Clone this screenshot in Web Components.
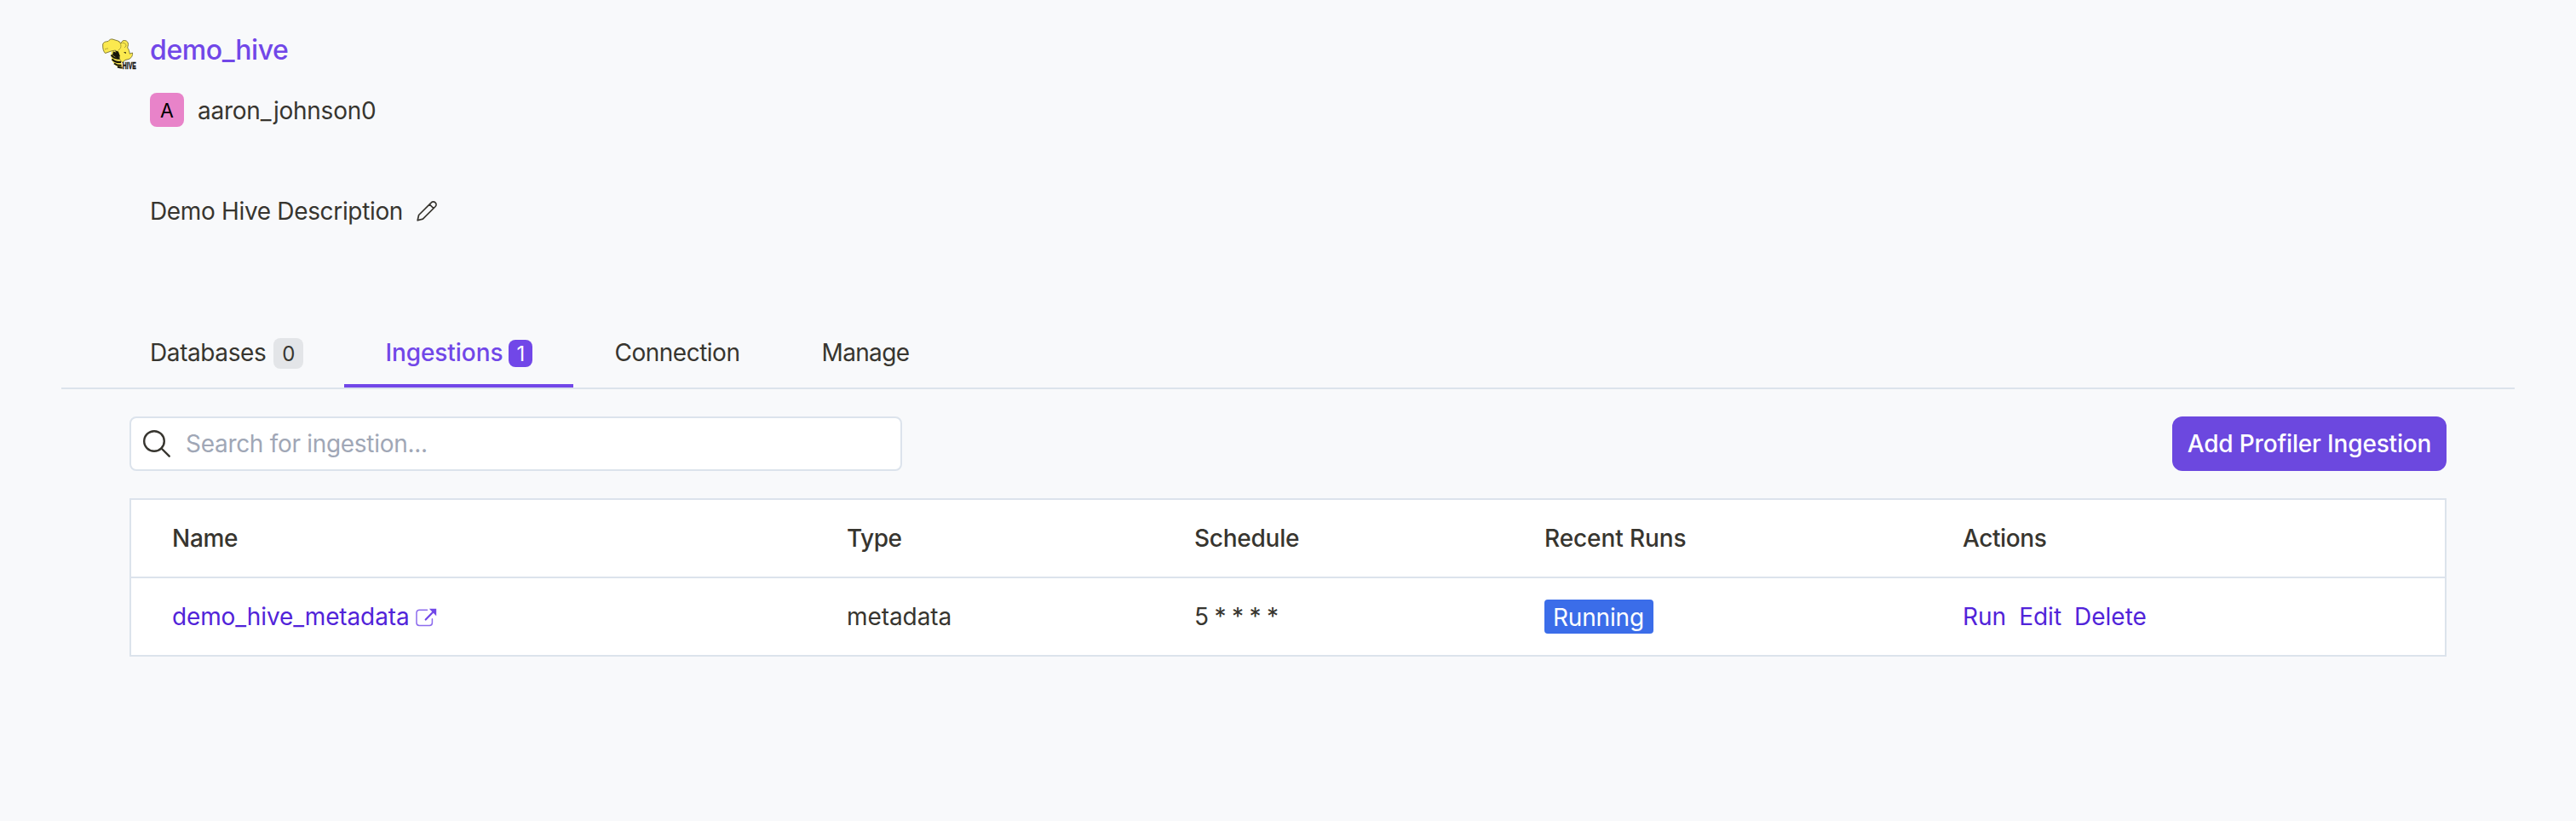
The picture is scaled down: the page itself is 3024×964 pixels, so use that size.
<!DOCTYPE html>
<html lang="en">
<head>
<meta charset="utf-8">
<title>demo_hive</title>
<style>
html,body{margin:0;background:#f8f9fb}
body{font:400 28px/42px Inter,"Liberation Sans",sans-serif;color:#37352f;min-height:964px}
</style>
</head>
<body>
<service-page></service-page>
<script>
const define = (name, html) => {
  const t = document.createElement('template');
  t.innerHTML = html;
  customElements.define(name, class extends HTMLElement {
    constructor() {
      super();
      this.attachShadow({ mode: 'open' }).append(t.content.cloneNode(true));
    }
  });
};

define('hive-logo', `
<style>:host{display:block;width:40px;height:37px}svg{display:block;overflow:visible}</style>
<svg width="44" height="42" viewBox="0 0 44 42">
  <path d="M11 15c4-1 8 1 10 5l1 7 2 8.500c-6-.5-11-5-13-11-.8-3-.8-6.500 0-9.500z" fill="#f2e04e"/>
  <path d="M10.500 19.500c2 3 6 4.500 10 4M11.500 24.500c3 3 6 4 10.500 3.500M14 29.500c3 2 5.500 2.700 8.500 2.200M18 33.500c2 .8 3.500 1.200 5.500 1" fill="none" stroke="#16140a" stroke-width="2"/>
  <path d="M13 15.500l6 2 3.500 7-5-1-5.500-4z" fill="#16140a"/>
  <path d="M.7 8C.5 5 3 3.800 7 3.500 8.500 1.500 10 .7 12 1l7 2.200c1.500.8 2.500 1.800 3.300 2.800C22.500 3.500 24.500 2.300 26.500 2.500c2.800.3 4.200 2.500 4 5-.1 1.500-.8 2.700-.8 3.500 1.500 2 2.300 4.500 2.600 7.200l3.200-1.200c.5 3.500-1.500 6.500-4.500 7.500l-4 1-3.500 3-2.800-3.500-1-6-4.200-5-5 1-7 2.500C1.500 15.500.5 12 .7 8z" fill="#fbe94f" stroke="#77702d" stroke-width=".9" stroke-linejoin="round"/>
  <path d="M19.500 4c2.500 2 3 4.500 2 7.500l-3 3M23.500 5.500c3-.5 4.500 1 4.500 3.500l-2 2M3 13c2-1 3-1 4-1" fill="none" stroke="#a49730" stroke-width=".9"/>
  <path d="M15 14.500l4 1 2 6-2.500-1zM25 16.500l2.500-.5.5 2z" fill="#16140a"/>
  <text x="23.800" y="36.300" font-family="Liberation Sans,sans-serif" font-weight="700" font-size="10.500" textLength="16" lengthAdjust="spacingAndGlyphs" fill="#14130f" stroke="#14130f" stroke-width=".4">HIVE</text>
</svg>`);

define('user-avatar', `
<style>:host{display:flex;align-items:center;justify-content:center;width:40px;height:40px;border-radius:8px;background:#e883c9;color:#000;font-size:23px;line-height:40px;box-sizing:border-box;padding-top:2px;letter-spacing:0}</style><slot></slot>`);

define('pencil-icon', `
<style>:host{display:block;width:24px;height:24px}svg{display:block}</style>
<svg width="24" height="24" viewBox="0 0 24 24" fill="none" stroke="#37352f" stroke-width="1.700" stroke-linejoin="round" stroke-linecap="round">
  <path d="M1.200 22.800l1.400-6.300L17.300 1.900a3.200 3.200 0 0 1 4.800 4.600L7.400 21.100zM15.300 4l4.700 4.600"/>
</svg>`);

define('external-icon', `
<style>:host{display:block;width:25px;height:22px}svg{display:block}</style>
<svg width="25" height="22" viewBox="0 0 25 22" fill="none" stroke="#7147e8" stroke-linecap="round">
  <path d="M13.500 2.200H4.200A3.200 3.200 0 0 0 1 5.400v11.800a3.200 3.200 0 0 0 3.200 3.200h12a3.200 3.200 0 0 0 3.200-3.200v-4.500" stroke-width="1.500" opacity=".8"/>
  <path d="M11.700 13.500L20 5" stroke-width="2.200"/>
  <path d="M15.800.8h8.400v8.400z" fill="#7147e8" stroke="none"/>
</svg>`);

define('search-icon', `
<style>:host{display:block;width:32px;height:32px}svg{display:block}</style>
<svg width="32" height="32" viewBox="0 0 32 32" fill="none" stroke="#37352f" stroke-width="2.400" stroke-linecap="round">
  <circle cx="13" cy="13" r="11.800"/><path d="M21.500 21.500l9.200 9.200"/>
</svg>`);

define('service-header', `
<style>
:host{display:flex;flex-direction:column;padding:37px 0 0 120px}
.row{display:flex;align-items:center}
.title{gap:16px;height:44px}
.title b{font-weight:500;font-size:32px;line-height:44px;color:#7147e8;letter-spacing:-.4px}
hive-logo{margin-top:8px}
.owner{gap:16px;margin:28px 0 0 56px;height:40px}
.owner span{letter-spacing:-.24px;padding-top:1px}
.desc{gap:16px;margin:78px 0 0 56px;height:42px}
.desc span{letter-spacing:-.34px}
</style>
<div class="row title"><hive-logo></hive-logo><b>demo_hive</b></div>
<div class="row owner"><user-avatar>A</user-avatar><span>aaron_johnson0</span></div>
<div class="row desc"><span>Demo Hive Description</span><pencil-icon></pencil-icon></div>`);

define('tab-item', `
<style>
:host{display:flex;box-sizing:border-box;align-items:center;height:84px;padding:6px 48px 0;border-bottom:4px solid transparent;white-space:nowrap}
:host([active]){color:#7147e8;font-weight:500;border-color:#7147e8}
</style><slot></slot><slot name="count"></slot>`);

define('count-badge', `
<style>
:host{display:flex;align-items:center;justify-content:center;box-sizing:border-box;width:35px;height:36px;margin:2px 0 0 9px;border-radius:8px;background:#e3e5e8;color:#37352f;font-size:24px;line-height:36px;letter-spacing:0;padding-top:1px}
:host([active]){width:28px;height:32px;margin-left:7px;background:#7147e8;color:#fff;font-weight:400}
</style><slot></slot>`);

define('tab-bar', `
<style>:host{display:flex;margin:102px 72px 0;padding-left:56px;border-bottom:2px solid #dce3ec}</style><slot></slot>`);

define('search-box', `
<style>
:host{display:flex;align-items:center;box-sizing:border-box;width:907px;height:64px;gap:18px;padding-left:14px;border:2px solid #dce3ec;border-radius:8px;background:#fff}
span{color:#a0a7b6;letter-spacing:-.3px}
</style><search-icon></search-icon><span><slot></slot></span>`);

define('primary-button', `
<style>:host{display:flex;align-items:center;justify-content:center;width:322px;height:64px;border-radius:12px;background:#6c48df;color:#fff;font-weight:500;letter-spacing:-.16px}</style><slot></slot>`);

define('status-badge', `
<style>:host{display:inline-flex;align-items:center;box-sizing:border-box;width:128px;height:40px;padding:2px 0 0 10px;border-radius:4px;background:#3b6de9;color:#fff;letter-spacing:-.17px}</style><slot></slot>`);

define('ingestion-table', `
<style>
:host{display:block;border:2px solid #dce3ec;background:#fff}
.row{display:grid;grid-template-columns:792px 408px 411px 491px 1fr;align-items:center;height:90px;padding-left:48px}
.head{font-weight:500;border-bottom:2px solid #dce3ec}
.link,.actions{display:flex;align-items:center;color:#5123d9}
.link{gap:8px;letter-spacing:-.13px}
.actions{gap:15px}
external-icon{margin-top:1px}
</style>
<div class="row head">
  <span style="letter-spacing:-.3px">Name</span><span style="letter-spacing:-.5px">Type</span><span style="letter-spacing:-.25px">Schedule</span><span style="letter-spacing:-.1px">Recent Runs</span><span style="letter-spacing:-.4px">Actions</span>
</div>
<div class="row">
  <span class="link">demo_hive_metadata<external-icon></external-icon></span>
  <span style="letter-spacing:-.07px">metadata</span>
  <span style="letter-spacing:-.7px">5 * * * *</span>
  <status-badge>Running</status-badge>
  <span class="actions"><span>Run</span><span>Edit</span><span>Delete</span></span>
</div>`);

define('service-page', `
<style>
:host{display:block}
.toolbar{display:flex;justify-content:space-between;margin:32px 152px}
ingestion-table{margin:0 152px}
</style>
<service-header></service-header>
<tab-bar>
  <tab-item style="letter-spacing:-.4px">Databases<count-badge slot="count">0</count-badge></tab-item>
  <tab-item active style="letter-spacing:-.07px">Ingestions<count-badge slot="count" active>1</count-badge></tab-item>
  <tab-item style="letter-spacing:-.49px">Connection</tab-item>
  <tab-item style="letter-spacing:-.64px">Manage</tab-item>
</tab-bar>
<div class="toolbar"><search-box>Search for ingestion...</search-box><primary-button>Add Profiler Ingestion</primary-button></div>
<ingestion-table></ingestion-table>`);
</script>
</body>
</html>
